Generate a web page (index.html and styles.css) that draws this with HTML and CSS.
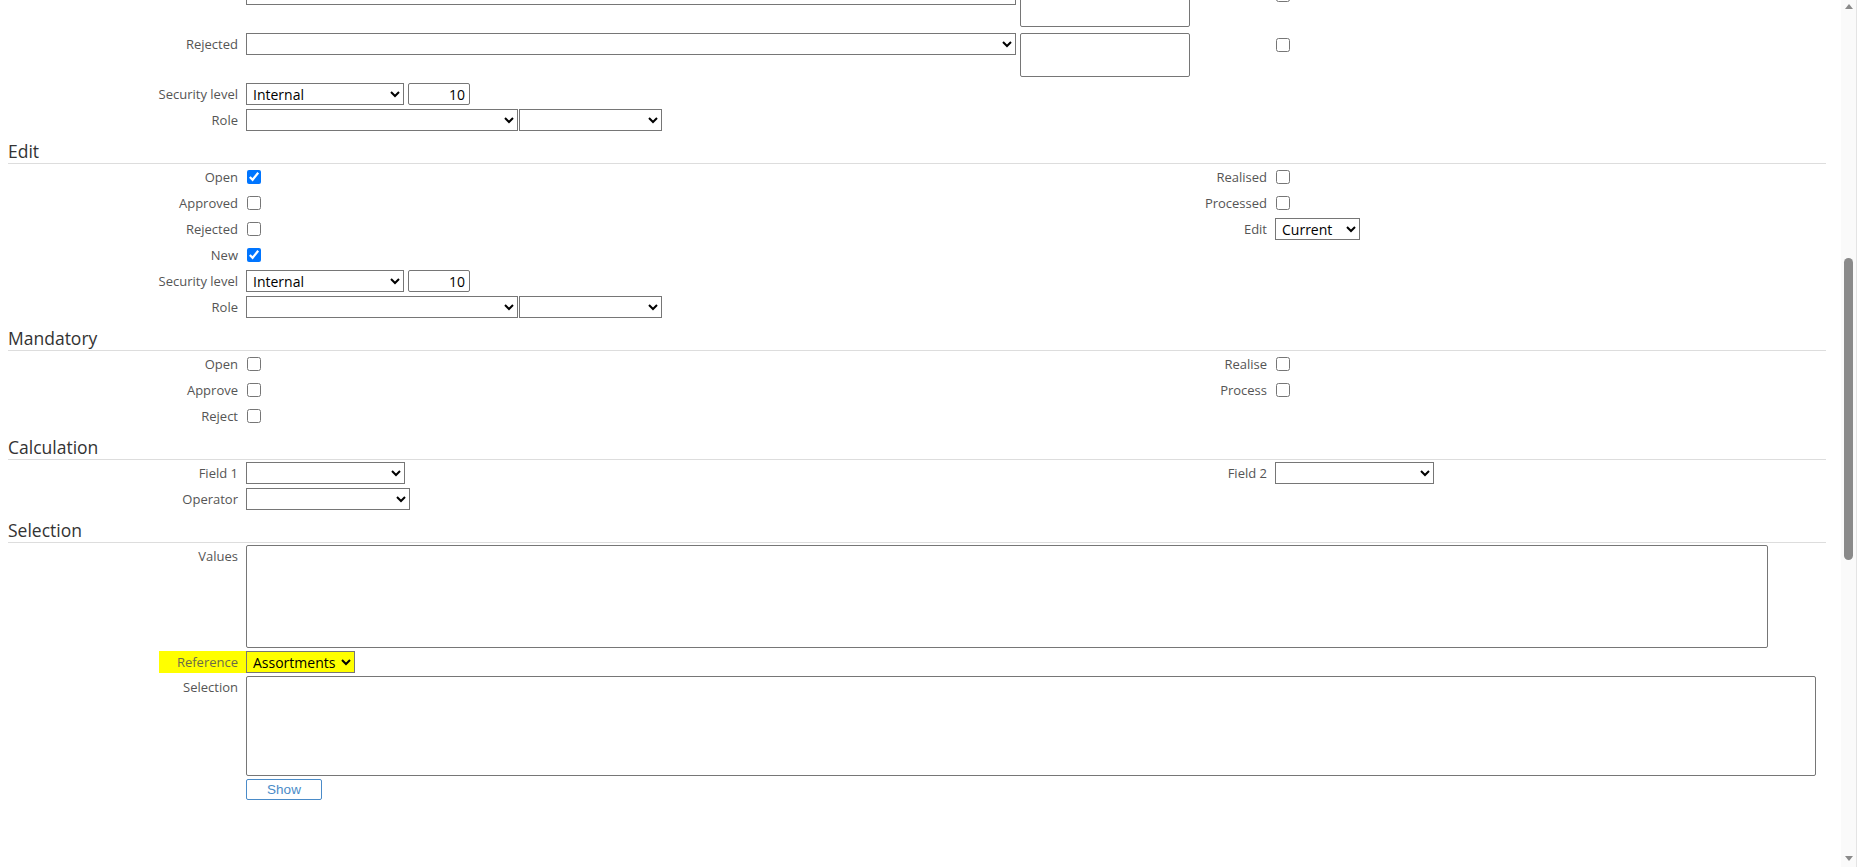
FILE: index.html
```html
<!DOCTYPE html>
<html lang="en">
<head>
<meta charset="utf-8">
<title>Field settings</title>
<link rel="stylesheet" href="styles.css">
</head>
<body>
<div class="page">

  <!-- Status-specific settings (continued from above) -->
  <section class="sec sec-status">
    <div class="fields">
      <div class="lbl"></div>
      <div class="ctl">
        <select class="sel-status"><option></option></select>
        <textarea class="note"></textarea>
      </div>
      <div class="lbl r"></div>
      <div class="ctl r"><input class="cb-top" type="checkbox"></div>

      <div class="lbl">Rejected</div>
      <div class="ctl">
        <select class="sel-status"><option></option></select>
        <textarea class="note"></textarea>
      </div>
      <div class="lbl r"></div>
      <div class="ctl r"><input class="cb-top" type="checkbox"></div>

      <div class="lbl">Security level</div>
      <div class="ctl">
        <select class="sel-level"><option>Internal</option></select>
        <input class="num" type="text" value="10">
      </div>

      <div class="lbl">Role</div>
      <div class="ctl tight">
        <select class="sel-role"><option></option></select>
        <select class="sel-role2"><option></option></select>
      </div>
    </div>
  </section>

  <section class="sec">
    <h2 class="sec-head">Edit</h2>
    <div class="fields">
      <div class="lbl">Open</div>
      <div class="ctl"><input type="checkbox" checked></div>
      <div class="lbl r">Realised</div>
      <div class="ctl r"><input type="checkbox"></div>

      <div class="lbl">Approved</div>
      <div class="ctl"><input type="checkbox"></div>
      <div class="lbl r">Processed</div>
      <div class="ctl r"><input type="checkbox"></div>

      <div class="lbl">Rejected</div>
      <div class="ctl"><input type="checkbox"></div>
      <div class="lbl r">Edit</div>
      <div class="ctl r"><select class="sel-edit"><option>Current</option></select></div>

      <div class="lbl">New</div>
      <div class="ctl"><input type="checkbox" checked></div>

      <div class="lbl">Security level</div>
      <div class="ctl">
        <select class="sel-level"><option>Internal</option></select>
        <input class="num" type="text" value="10">
      </div>

      <div class="lbl">Role</div>
      <div class="ctl tight">
        <select class="sel-role"><option></option></select>
        <select class="sel-role2"><option></option></select>
      </div>
    </div>
  </section>

  <section class="sec">
    <h2 class="sec-head">Mandatory</h2>
    <div class="fields">
      <div class="lbl">Open</div>
      <div class="ctl"><input type="checkbox"></div>
      <div class="lbl r">Realise</div>
      <div class="ctl r"><input type="checkbox"></div>

      <div class="lbl">Approve</div>
      <div class="ctl"><input type="checkbox"></div>
      <div class="lbl r">Process</div>
      <div class="ctl r"><input type="checkbox"></div>

      <div class="lbl">Reject</div>
      <div class="ctl"><input type="checkbox"></div>
    </div>
  </section>

  <section class="sec">
    <h2 class="sec-head">Calculation</h2>
    <div class="fields">
      <div class="lbl">Field 1</div>
      <div class="ctl"><select class="sel-field"><option></option></select></div>
      <div class="lbl r">Field 2</div>
      <div class="ctl r"><select class="sel-field"><option></option></select></div>

      <div class="lbl">Operator</div>
      <div class="ctl"><select class="sel-op"><option></option></select></div>
    </div>
  </section>

  <section class="sec">
    <h2 class="sec-head">Selection</h2>
    <div class="fields fields-sel">
      <div class="lbl">Values</div>
      <div class="ctl span"><textarea class="ta-values"></textarea></div>

      <div class="lbl hl-cell"><span class="hl">Reference</span></div>
      <div class="ctl"><select class="sel-ref"><option>Assortments</option></select></div>

      <div class="lbl">Selection</div>
      <div class="ctl span"><textarea class="ta-sel"></textarea></div>

      <div class="lbl"></div>
      <div class="ctl"><button class="btn" type="button">Show</button></div>
    </div>
  </section>

</div>

<!-- window scrollbar -->
<div class="scrollbar">
  <span class="sb-up"></span>
  <span class="sb-thumb"></span>
  <span class="sb-down"></span>
</div>
</body>
</html>
```

FILE: styles.css
```css
html, body {
  margin: 0;
  padding: 0;
  background: #fff;
  overflow: hidden;
}

body {
  font-family: "Open Sans", "Liberation Sans", sans-serif;
  font-size: 13px;
  color: #555;
}

.page {
  padding: 0 33px 0 8px;
}

.sec-status {
  margin-top: -17px;
}

/* section title with rule underneath */
.sec-head {
  margin: 4px 0 2px;
  padding: 4px 0 0 0;
  font-size: 17.5px;
  font-weight: 400;
  line-height: 24px;
  color: #333;
  border-bottom: 1px solid #ddd;
}

/* label | control | label | control */
.fields {
  display: grid;
  grid-template-columns: 238px 950px 79px 1fr;
  row-gap: 4px;
  align-items: start;
}

.fields-sel {
  row-gap: 3px;
}

.lbl {
  grid-column: 1;
  text-align: right;
  padding-right: 8px;
  line-height: 22px;
  min-height: 22px;
  white-space: nowrap;
}

.lbl.r {
  grid-column: 3;
}

.ctl {
  grid-column: 2;
  display: flex;
  align-items: flex-start;
  gap: 4px;
  min-height: 22px;
  white-space: nowrap;
}

.ctl.r {
  grid-column: 4;
}

.ctl.span {
  grid-column: 2 / 5;
}

.ctl.tight {
  gap: 1px;
}

/* form controls */
select,
input.num,
textarea,
.btn {
  box-sizing: border-box;
  margin: 0;
  font-family: "Open Sans", "Liberation Sans", sans-serif;
  font-size: 14px;
  color: #000;
  background-color: #fff;
  border: 1px solid #767676;
}

select {
  height: 22px;
  padding: 0 0 0 2px;
  border-radius: 0;
  line-height: 20px;
}

textarea {
  resize: none;
  border-radius: 2px;
  display: block;
}

input[type="checkbox"] {
  width: 14px;
  height: 14px;
  margin: 4px 0 0 1px;
  accent-color: #0075ff;
}

input.cb-top {
  margin-top: 5px;
}

input.num {
  width: 62px;
  height: 22px;
  padding: 0 4px;
  text-align: right;
  border-radius: 2px;
}

.sel-status { width: 770px; }
.note { width: 170px; height: 44px; margin-bottom: 2px; }
.sel-level { width: 158px; }
.sel-role { width: 272px; }
.sel-role2 { width: 143px; }
.sel-edit { width: 85px; }
.sel-field { width: 159px; }
.sel-op { width: 164px; }
.sel-ref { width: 109px; background-color: #ffff00; }

.ta-values { width: 1522px; height: 103px; }
.ta-sel { width: 1570px; height: 100px; }

/* highlighted reference field */
.lbl.hl-cell {
  padding-right: 0;
}

.hl {
  display: inline-block;
  background: #ffff00;
  padding: 0 8px 0 18px;
  line-height: 22px;
  color: #6b6b4a;
}

.btn {
  width: 76px;
  height: 21px;
  padding: 0;
  font-family: "Liberation Sans", Arial, sans-serif;
  font-size: 13.5px;
  color: #4a8bc8;
  border: 1px solid #4a8bc8;
  border-radius: 2px;
  background: #fff;
}

/* scrollbar drawn over the right edge */
.scrollbar {
  position: fixed;
  top: 0;
  right: 2px;
  width: 15px;
  height: 100%;
  background: #fafafa;
  border-right: 1px solid #e4e4e4;
}

.sb-thumb {
  position: absolute;
  left: 3px;
  top: 258px;
  width: 9px;
  height: 302px;
  border-radius: 5px;
  background: #8a8a8a;
}

.sb-up,
.sb-down {
  position: absolute;
  left: 4px;
  width: 0;
  height: 0;
  border-left: 4px solid transparent;
  border-right: 4px solid transparent;
}

.sb-up {
  top: 4px;
  border-bottom: 5px solid #8a8a8a;
}

.sb-down {
  bottom: 6px;
  border-top: 5px solid #8a8a8a;
}
```
